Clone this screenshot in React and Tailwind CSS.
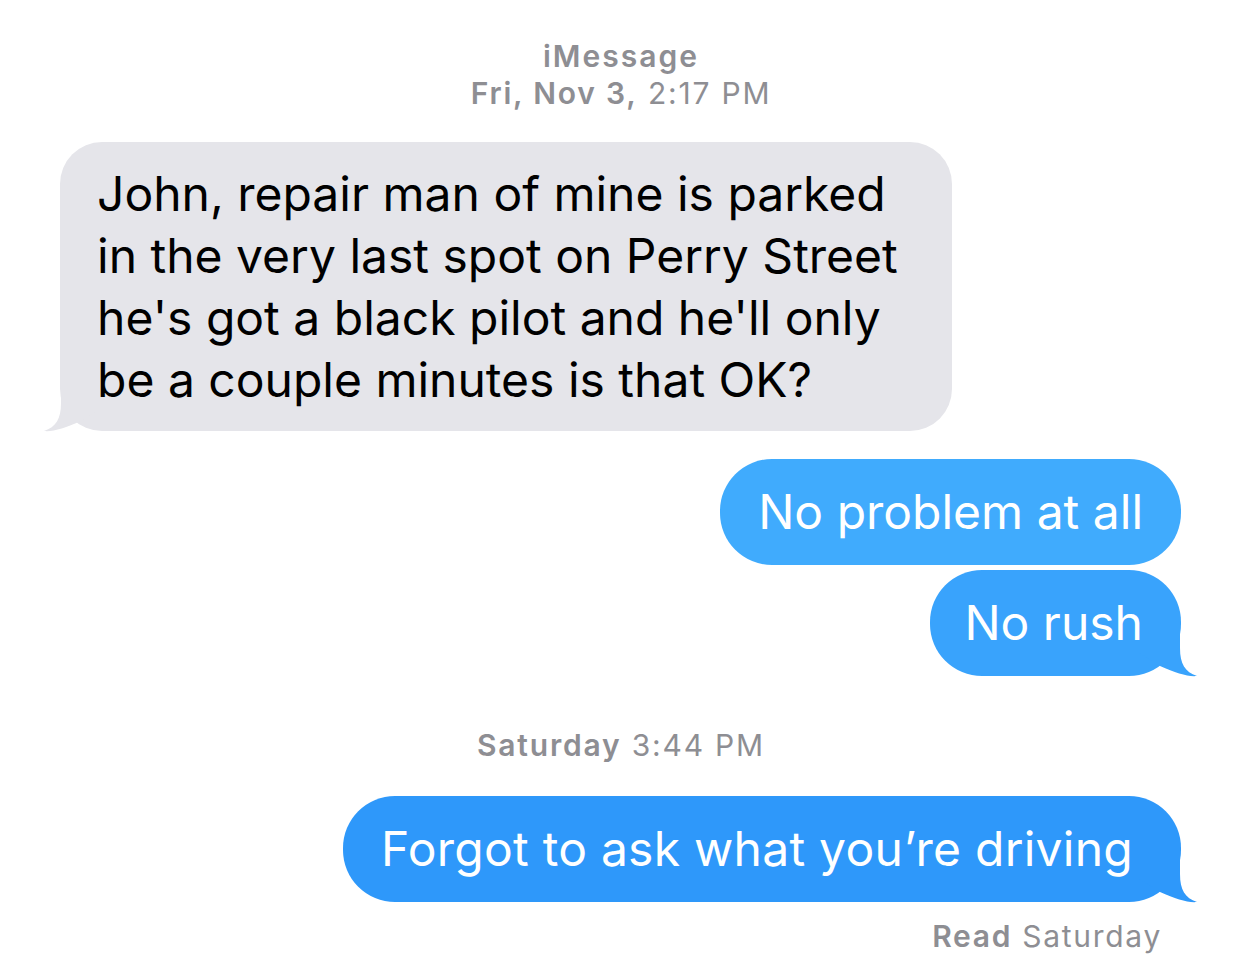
import React from "react";

function Tail({ color, side }) {
  // little curled tail at the bottom corner of a bubble
  const pos =
    side === "right"
      ? "right-[-17px] bottom-[-1px]"
      : "left-[-17px] bottom-[-1px] -scale-x-100";
  return (
    <svg
      className={`absolute ${pos}`}
      width="60"
      height="47"
      viewBox="0 0 60 47"
    >
      <path
        d="M42 0 L42 18 C42 34 47 42 59 46 C50 47 38 43 22 36 L0 22 L0 0 Z"
        fill={color}
      />
    </svg>
  );
}

function Bubble({ color, text, tail, className = "pl-[38px] pr-[38px]" }) {
  return (
    <div
      className={`relative rounded-[52px] h-[106px] flex items-center text-white text-[48px] leading-[62px] ${className}`}
      style={{ backgroundColor: color }}
    >
      <span className="relative z-10 whitespace-nowrap">{text}</span>
      {tail && <Tail color={color} side="right" />}
    </div>
  );
}

export default function App() {
  return (
    <div
      className="w-[1242px] h-[958px] bg-white overflow-hidden flex flex-col"
      style={{ fontFamily: "Inter, 'Noto Sans', sans-serif" }}
    >
      <div className="pt-[38px] text-center text-[#8e8e93] text-[30px] leading-[37px]">
        <div className="font-semibold tracking-[2px]">iMessage</div>
        <div className="tracking-[1.8px]">
          <span className="font-semibold">Fri, Nov 3,</span> 2:17 PM
        </div>
      </div>

      <div className="mt-[30px] ml-[60px] relative w-[892px] rounded-[42px] bg-[#e5e5ea] pt-[21px] pb-[20px] px-[37px] text-black text-[48px] leading-[62px]">
        <div className="relative z-10 whitespace-nowrap">
          John, repair man of mine is parked
          <br />
          in the very last spot on Perry Street
          <br />
          he's got a black pilot and he'll only
          <br />
          be a couple minutes is that OK?
        </div>
        <Tail color="#e5e5ea" side="left" />
      </div>

      <div className="mt-[28px] mr-[61px] flex flex-col items-end gap-[5px]">
        <Bubble color="#40abfd" text="No problem at all" />
        <Bubble color="#39a3fc" text="No rush" tail className="pl-[34px] pr-[38px]" />
      </div>

      <div className="mt-[51px] text-center text-[#8e8e93] text-[30px] leading-[37px] tracking-[1.8px]">
        <span className="font-semibold">Saturday</span> 3:44 PM
      </div>

      <div className="mt-[32px] mr-[61px] flex justify-end">
        <Bubble
          color="#2e98fa"
          text="Forgot to ask what you’re driving"
          tail
          className="pl-[38px] pr-[48px] tracking-[0.25px]"
        />
      </div>

      <div className="mt-[16px] mr-[80px] text-right text-[#8e8e93] text-[30px] leading-[37px] tracking-[1.7px]">
        <span className="font-semibold">Read</span> Saturday
      </div>
    </div>
  );
}
